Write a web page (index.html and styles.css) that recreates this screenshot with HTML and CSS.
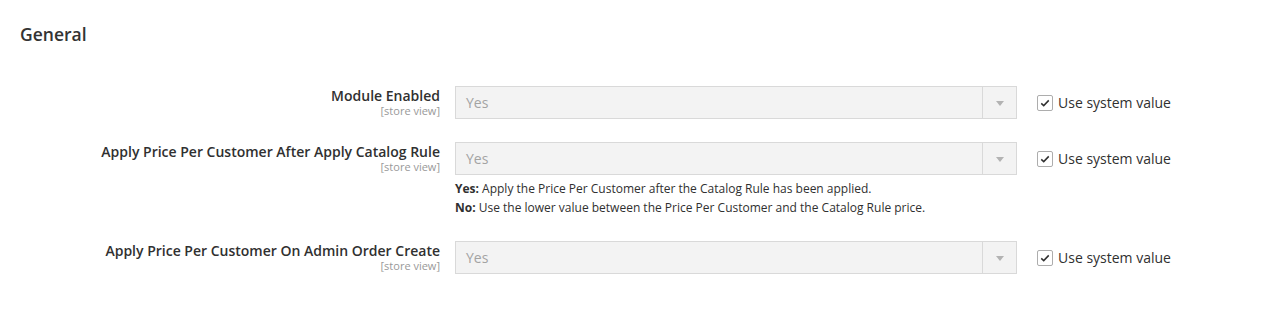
FILE: index.html
```html
<!DOCTYPE html>
<html lang="en">
<head>
  <meta charset="UTF-8">
  <title>General</title>
  <link rel="stylesheet" href="styles.css">
</head>
<body>
  <div class="section">
    <h2 class="section-title">General</h2>

    <div class="fields">
      <!-- Module Enabled -->
      <div class="field-row">
        <div class="label">
          <span class="label-text">Module Enabled</span>
          <span class="scope">[store view]</span>
        </div>
        <div class="value">
          <div class="select disabled">
            <span class="select-text">Yes</span>
            <span class="select-arrow"></span>
          </div>
        </div>
        <div class="use-default">
          <span class="checkbox"><svg viewBox="0 0 16 16" width="12" height="12"><path d="M3 8.5 L6.3 11.5 L13 4.5" fill="none" stroke="#303030" stroke-width="2"/></svg></span>
          <span class="use-default-text">Use system value</span>
        </div>
      </div>

      <!-- Apply after catalog rule -->
      <div class="field-row">
        <div class="label">
          <span class="label-text">Apply Price Per Customer After Apply Catalog Rule</span>
          <span class="scope">[store view]</span>
        </div>
        <div class="value">
          <div class="select disabled">
            <span class="select-text">Yes</span>
            <span class="select-arrow"></span>
          </div>
          <p class="note">
            <strong>Yes:</strong> Apply the Price Per Customer after the Catalog Rule has been applied.<br>
            <strong>No:</strong> Use the lower value between the Price Per Customer and the Catalog Rule price.
          </p>
        </div>
        <div class="use-default">
          <span class="checkbox"><svg viewBox="0 0 16 16" width="12" height="12"><path d="M3 8.5 L6.3 11.5 L13 4.5" fill="none" stroke="#303030" stroke-width="2"/></svg></span>
          <span class="use-default-text">Use system value</span>
        </div>
      </div>

      <!-- Admin order create -->
      <div class="field-row">
        <div class="label">
          <span class="label-text">Apply Price Per Customer On Admin Order Create</span>
          <span class="scope">[store view]</span>
        </div>
        <div class="value">
          <div class="select disabled">
            <span class="select-text">Yes</span>
            <span class="select-arrow"></span>
          </div>
        </div>
        <div class="use-default">
          <span class="checkbox"><svg viewBox="0 0 16 16" width="12" height="12"><path d="M3 8.5 L6.3 11.5 L13 4.5" fill="none" stroke="#303030" stroke-width="2"/></svg></span>
          <span class="use-default-text">Use system value</span>
        </div>
      </div>
    </div>
  </div>
</body>
</html>
```

FILE: styles.css
```css
body {
  margin: 0;
  font-family: "Open Sans", "Liberation Sans", sans-serif;
  color: #303030;
  background-color: #fff;
}
.section {
  padding: 24px 20px 0 20px;
}
.section-title {
  margin: 0;
  font-size: 17.5px;
  line-height: 20px;
  font-weight: 600;
  color: #333;
}
.fields {
  margin-top: 42px;
  display: flex;
  flex-direction: column;
  gap: 23px;
}
.field-row {
  display: flex;
  align-items: flex-start;
}
.label {
  width: 420px;
  flex-shrink: 0;
  text-align: right;
  display: flex;
  flex-direction: column;
  padding-top: 1px;
}
.label-text {
  font-size: 14px;
  line-height: 18px;
  font-weight: 600;
  color: #303030;
}
.scope {
  margin-top: -1px;
  font-size: 11px;
  line-height: 13px;
  color: #999;
}
.value {
  width: 562px;
  margin-left: 15px;
  flex-shrink: 0;
}
.select {
  height: 33px;
  box-sizing: border-box;
  border: 1px solid #d9d9d9;
  background-color: #f3f3f3;
  display: flex;
  align-items: center;
  position: relative;
}
.select-text {
  padding-left: 10px;
  font-size: 14px;
  color: #a3a3a3;
}
.select-arrow {
  position: absolute;
  right: 0;
  top: 0;
  bottom: 0;
  width: 33px;
  border-left: 1px solid #d9d9d9;
}
.select-arrow::after {
  content: "";
  position: absolute;
  left: 13px;
  top: 14px;
  border-left: 4px solid transparent;
  border-right: 4px solid transparent;
  border-top: 5px solid #b3b3b3;
}
.note {
  margin: 4px 0 1px 0;
  font-size: 12px;
  line-height: 19px;
  color: #303030;
}
.note strong {
  font-weight: 700;
}
.use-default {
  margin-left: 20px;
  display: flex;
  align-items: center;
  height: 33px;
}
.checkbox {
  width: 16px;
  height: 16px;
  box-sizing: border-box;
  border: 1px solid #adadad;
  border-radius: 2px;
  background-color: #fff;
  display: flex;
  align-items: center;
  justify-content: center;
}
.use-default-text {
  margin-left: 5px;
  font-size: 14px;
  color: #303030;
}
```
